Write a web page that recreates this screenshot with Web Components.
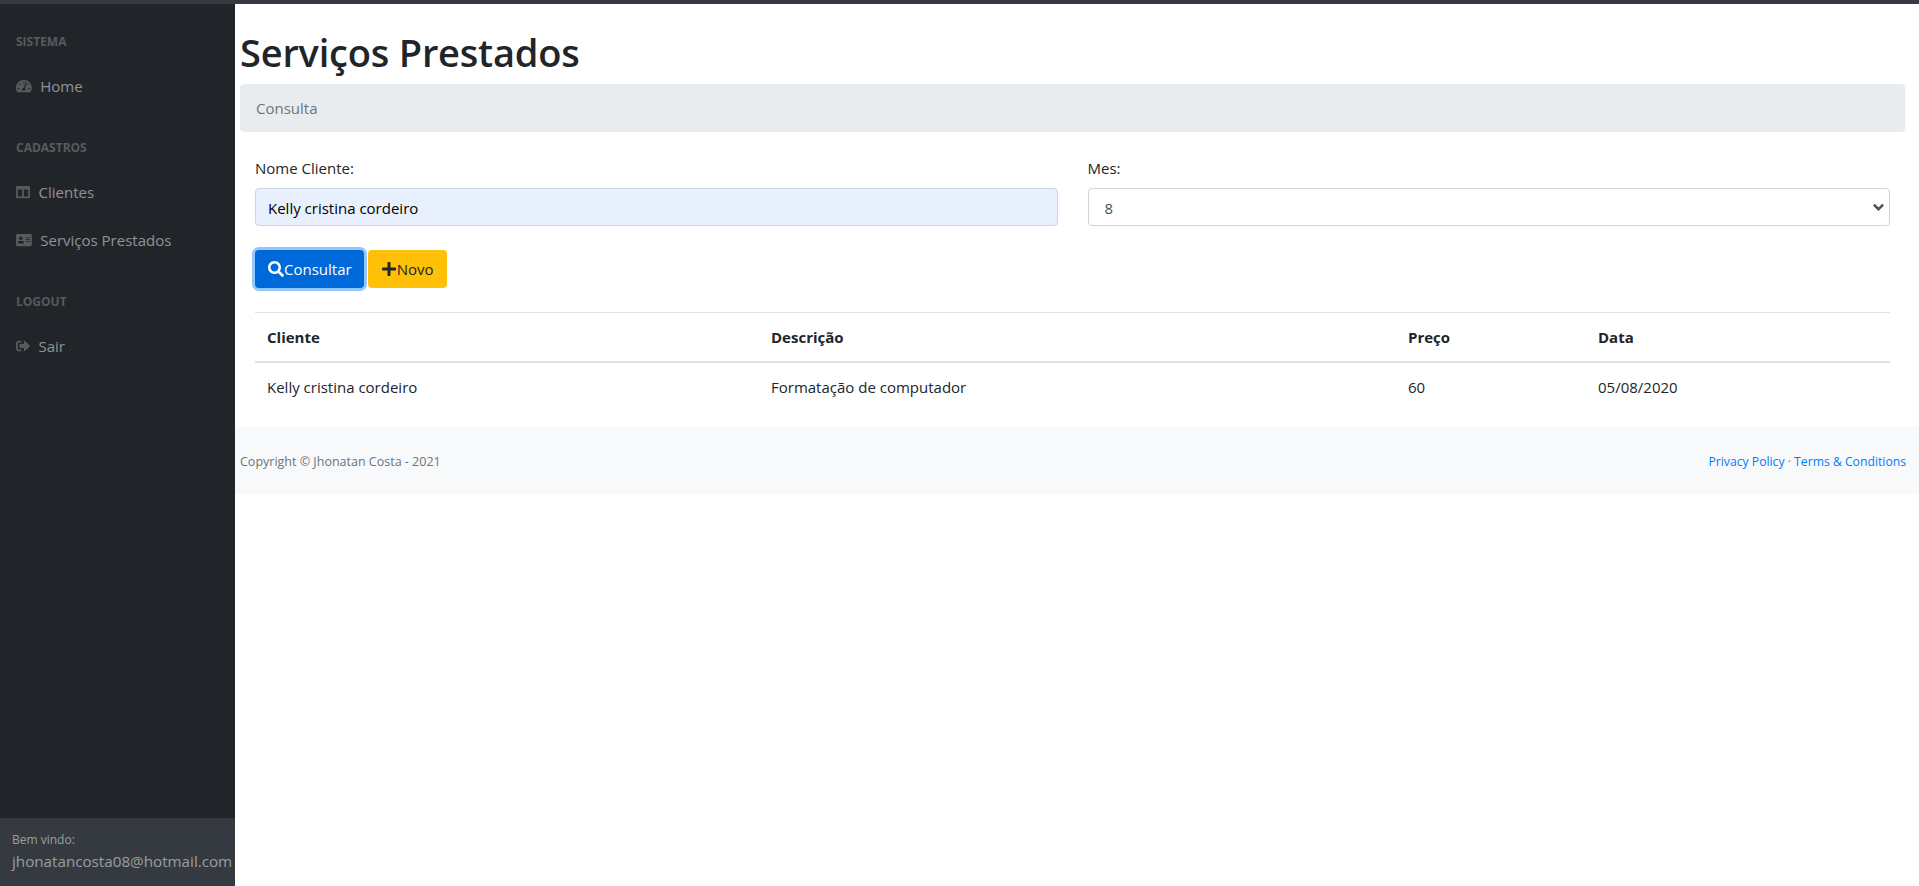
<!DOCTYPE html>
<html lang="pt-BR">
<head>
<meta charset="UTF-8">
<title>Serviços Prestados</title>
<style>
  html, body { margin: 0; height: 100%; }
  body { font-family: "Open Sans", "Liberation Sans", sans-serif; font-size: 15px; color: #212529; background: #fff; overflow: hidden; }
</style>
</head>
<body>
<template id="appShell">
  <style>
    :host { display: grid; grid-template-columns: 235px 1fr; grid-template-rows: 4px 1fr; height: 886px; }
    .top { grid-column: 1 / 3; background: #343a40; }
    main { min-width: 0; }
  </style>
  <div class="top"></div>
  <slot name="side"></slot>
  <main><slot></slot></main>
</template>

<template id="sideNav">
  <style>
    :host { display: flex; flex-direction: column; background: #212529; color: rgba(255,255,255,.5); }
    .menu { flex: 1; }
    .foot { height: 68px; box-sizing: border-box; padding: 13px 0 0 12px; background: #343a40; white-space: nowrap; }
    .foot small { display: block; font-size: 12px; line-height: 18px; }
    .foot span { display: block; font-size: 15.2px; line-height: 24px; }
  </style>
  <div class="menu"><slot></slot></div>
  <div class="foot"><small><slot name="hello"></slot></small><span><slot name="user"></slot></span></div>
</template>

<template id="navHeading">
  <style>
    :host { display: block; padding: 30px 16px 12px; font-size: 12px; line-height: 16px; font-weight: 700; text-transform: uppercase; color: rgba(255,255,255,.25); }
  </style>
  <slot></slot>
</template>

<template id="navLink">
  <style>
    :host { display: flex; align-items: center; height: 48px; padding: 0 16px; font-size: 15px; color: rgba(255,255,255,.5); }
    .ic { display: flex; margin-right: 8.5px; color: rgba(255,255,255,.25); }
    ::slotted(svg) { height: 14px; fill: currentColor; display: block; }
  </style>
  <span class="ic"><slot name="icon"></slot></span><slot></slot>
</template>

<template id="pageTitle">
  <style>
    :host { display: block; padding: 0 14px 0 5px; }
    h1 { margin: 0; padding: 21px 0 4px; font-size: 38px; letter-spacing: -.2px; line-height: 55px; font-weight: 600; color: #212529; }
    .crumb { height: 48px; display: flex; align-items: center; padding: 0 16px; background: #e9ecef; border-radius: 4px; color: #6c757d; font-size: 15px; }
  </style>
  <h1><slot></slot></h1>
  <div class="crumb"><slot name="crumb"></slot></div>
</template>

<template id="searchForm">
  <style>
    :host { display: block; padding: 0 29px 0 20px; }
    .fields { display: grid; grid-template-columns: 1fr 1fr; column-gap: 30px; padding-top: 24px; }
    .btns { display: flex; gap: 4px; padding: 24px 0; }
  </style>
  <div class="fields"><slot name="field"></slot></div>
  <div class="btns"><slot name="button"></slot></div>
</template>

<template id="formField">
  <style>
    :host { display: block; }
    label { display: block; font-size: 15px; line-height: 24px; margin-bottom: 8px; color: #212529; }
    input, select { display: block; width: 100%; height: 38px; box-sizing: border-box; padding: 1px 12px 0; font: inherit; font-size: 15px; border: 1px solid #ced4da; border-radius: 4px; outline: none; background-color: #fff; color: #495057; }
    input.filled { background: #e8f0fe; color: #000; }
    select { appearance: none; padding: 1px 36px 0 16px; background-image: url("data:image/svg+xml,%3csvg xmlns='http://www.w3.org/2000/svg' viewBox='0 0 16 16'%3e%3cpath fill='none' stroke='%23495057' stroke-linecap='square' stroke-linejoin='miter' stroke-width='3.5' d='M2.500 5l5.500 5.500 5.500-5.500'/%3e%3c/svg%3e"); background-repeat: no-repeat; background-position: right 5px center; background-size: 11px 11px; }
  </style>
  <label></label>
</template>

<template id="actionButton">
  <style>
    :host { display: block; }
    .b { display: flex; align-items: center; height: 38px; box-sizing: border-box; padding: 0 14px 0 13px; border-radius: 4px; font-size: 15px; background: #ffc107; color: #212529; }
    :host([primary]) .b { padding-right: 12px; background: #0069d9; color: #fff; box-shadow: 0 0 0 3px rgba(38,143,255,.5); }
    ::slotted(svg) { height: 16px; width: 16px; fill: currentColor; display: block; }
  </style>
  <div class="b"><slot name="icon"></slot><slot></slot></div>
</template>

<template id="resultTable">
  <style>
    :host { display: block; padding: 0 29px 0 20px; }
    table { width: 100%; table-layout: fixed; border-collapse: collapse; font-size: 15px; color: #212529; }
    th, td { text-align: left; padding: 0 12px; }
    th { height: 48px; font-weight: 700; border-top: 1px solid #dee2e6; border-bottom: 2px solid #dee2e6; }
    td { height: 48px; }
  </style>
  <table>
    <colgroup><col style="width:504px"><col style="width:637px"><col style="width:190px"><col></colgroup>
    <thead><tr></tr></thead>
    <tbody></tbody>
  </table>
</template>

<template id="pageFooter">
  <style>
    :host { display: flex; justify-content: space-between; align-items: center; height: 65px; padding: 2px 13px 0 5px; margin-top: 16px; background: #f8f9fa; font-size: 12.5px; color: #6c757d; }
    .links { font-size: 12.2px; }
    ::slotted(a) { color: #007bff; text-decoration: none; }
  </style>
  <div><slot></slot></div>
  <div class="links"><slot name="links"></slot></div>
</template>

<app-shell>
  <side-nav slot="side">
    <nav-heading>Sistema</nav-heading>
    <nav-link><svg slot="icon" viewBox="0 0 576 512"><path d="M288 32C128.940 32 0 160.940 0 320c0 52.800 14.250 102.260 39.060 144.800 5.610 9.620 16.300 15.200 27.440 15.200h443c11.140 0 21.830-5.580 27.440-15.200C561.750 422.260 576 372.800 576 320c0-159.060-128.940-288-288-288zm0 64c14.710 0 26.580 10.130 30.320 23.650-1.110 2.260-2.640 4.230-3.450 6.670l-9.220 27.670c-5.130 3.490-10.970 6.010-17.640 6.010-17.670 0-32-14.330-32-32S270.330 96 288 96zM96 384c-17.670 0-32-14.330-32-32s14.330-32 32-32 32 14.330 32 32-14.330 32-32 32zm48-160c-17.670 0-32-14.330-32-32s14.330-32 32-32 32 14.330 32 32-14.330 32-32 32zm246.770-72.410l-61.330 184C343.130 347.330 352 364.540 352 384c0 11.720-3.380 22.550-8.880 32H232.880c-5.500-9.450-8.880-20.280-8.880-32 0-33.940 26.500-61.430 59.900-63.590l61.340-184.010c4.170-12.560 17.730-19.450 30.360-15.170 12.570 4.190 19.350 17.790 15.170 30.360zm14.660 57.200l15.520-46.550c3.470-1.290 7.130-2.230 11.050-2.230 17.670 0 32 14.330 32 32s-14.330 32-32 32c-11.380-.010-20.890-6.280-26.570-15.220zM480 384c-17.670 0-32-14.330-32-32s14.330-32 32-32 32 14.330 32 32-14.330 32-32 32z"/></svg>Home</nav-link>
    <nav-heading>Cadastros</nav-heading>
    <nav-link><svg slot="icon" viewBox="0 0 512 512"><path d="M464 32H48C21.490 32 0 53.490 0 80v352c0 26.510 21.490 48 48 48h416c26.510 0 48-21.490 48-48V80c0-26.510-21.490-48-48-48zM224 416H64V160h160v256zm224 0H288V160h160v256z"/></svg>Clientes</nav-link>
    <nav-link><svg slot="icon" viewBox="0 0 576 512"><path d="M528 32H48C21.500 32 0 53.500 0 80v352c0 26.500 21.500 48 48 48h480c26.500 0 48-21.500 48-48V80c0-26.500-21.500-48-48-48zm-352 96c35.300 0 64 28.700 64 64s-28.700 64-64 64-64-28.700-64-64 28.700-64 64-64zm112 236.800c0 10.600-10 19.200-22.400 19.200H86.400C74 384 64 375.400 64 364.800v-19.200c0-31.800 30.100-57.600 67.200-57.600h5c12.300 5.100 25.700 8 39.800 8s27.600-2.900 39.800-8h5c37.100 0 67.200 25.800 67.200 57.600v19.200zM512 312c0 4.400-3.600 8-8 8H360c-4.400 0-8-3.600-8-8v-16c0-4.400 3.600-8 8-8h144c4.400 0 8 3.600 8 8v16zm0-64c0 4.400-3.600 8-8 8H360c-4.400 0-8-3.600-8-8v-16c0-4.400 3.600-8 8-8h144c4.400 0 8 3.600 8 8v16zm0-64c0 4.400-3.600 8-8 8H360c-4.400 0-8-3.600-8-8v-16c0-4.400 3.600-8 8-8h144c4.400 0 8 3.600 8 8v16z"/></svg>Serviços Prestados</nav-link>
    <nav-heading>Logout</nav-heading>
    <nav-link><svg slot="icon" viewBox="0 0 512 512"><path d="M497 273L329 441c-15 15-41 4.500-41-17v-96H152c-13.300 0-24-10.700-24-24v-96c0-13.300 10.700-24 24-24h136V88c0-21.400 25.900-32 41-17l168 168c9.300 9.400 9.300 24.600 0 34zM192 436v-40c0-6.600-5.400-12-12-12H96c-17.700 0-32-14.300-32-32V160c0-17.700 14.300-32 32-32h84c6.600 0 12-5.400 12-12V76c0-6.600-5.400-12-12-12H96c-53 0-96 43-96 96v192c0 53 43 96 96 96h84c6.600 0 12-5.400 12-12z"/></svg>Sair</nav-link>
    <span slot="hello">Bem vindo:</span>
    <span slot="user">jhonatancosta08@hotmail.com</span>
  </side-nav>

  <page-title>Serviços Prestados<span slot="crumb">Consulta</span></page-title>

  <search-form>
    <form-field slot="field" label="Nome Cliente:" value="Kelly cristina cordeiro"></form-field>
    <form-field slot="field" label="Mes:" value="8" options="8"></form-field>
    <action-button slot="button" primary><svg slot="icon" viewBox="0 0 512 512"><path d="M505 442.700L405.300 343c-4.500-4.500-10.600-7-17-7H372c27.600-35.300 44-79.700 44-128C416 93.100 322.900 0 208 0S0 93.100 0 208s93.100 208 208 208c48.300 0 92.700-16.400 128-44v16.300c0 6.400 2.500 12.500 7 17l99.700 99.700c9.400 9.400 24.600 9.400 33.900 0l28.300-28.300c9.400-9.400 9.400-24.600.1-34zM208 336c-70.700 0-128-57.200-128-128 0-70.700 57.200-128 128-128 70.700 0 128 57.200 128 128 0 70.700-57.200 128-128 128z"/></svg>Consultar</action-button>
    <action-button slot="button"><svg slot="icon" viewBox="0 0 448 512"><path d="M416 208H272V64c0-17.670-14.330-32-32-32h-32c-17.670 0-32 14.330-32 32v144H32c-17.670 0-32 14.330-32 32v32c0 17.670 14.330 32 32 32h144v144c0 17.670 14.330 32 32 32h32c17.670 0 32-14.330 32-32V304h144c17.670 0 32-14.330 32-32v-32c0-17.670-14.330-32-32-32z"/></svg>Novo</action-button>
  </search-form>

  <result-table head="Cliente|Descrição|Preço|Data" rows="Kelly cristina cordeiro|Formatação de computador|60|05/08/2020"></result-table>

  <page-footer>Copyright © Jhonatan Costa - 2021<a slot="links" href="#">Privacy Policy</a><span slot="links"> · </span><a slot="links" href="#">Terms &amp; Conditions</a></page-footer>
</app-shell>

<script>
  // plain elements: shadow root + clone of their template
  function simple(tag, tplId) {
    customElements.define(tag, class extends HTMLElement {
      constructor() {
        super();
        this.attachShadow({ mode: 'open' }).appendChild(document.getElementById(tplId).content.cloneNode(true));
      }
    });
  }
  simple('app-shell', 'appShell');
  simple('side-nav', 'sideNav');
  simple('nav-heading', 'navHeading');
  simple('nav-link', 'navLink');
  simple('page-title', 'pageTitle');
  simple('search-form', 'searchForm');
  simple('action-button', 'actionButton');
  simple('page-footer', 'pageFooter');

  class FormField extends HTMLElement {
    constructor() {
      super();
      this._root = this.attachShadow({ mode: 'open' });
      this._root.appendChild(document.getElementById('formField').content.cloneNode(true));
    }
    connectedCallback() {
      const label = this._root.querySelector('label');
      label.textContent = this.getAttribute('label');
      let ctl;
      if (this.hasAttribute('options')) {
        ctl = document.createElement('select');
        this.getAttribute('options').split(',').forEach(o => {
          const opt = document.createElement('option');
          opt.textContent = o;
          ctl.appendChild(opt);
        });
      } else {
        ctl = document.createElement('input');
        ctl.className = 'filled';
        ctl.setAttribute('value', this.getAttribute('value'));
      }
      this._root.appendChild(ctl);
    }
  }
  customElements.define('form-field', FormField);

  class ResultTable extends HTMLElement {
    constructor() {
      super();
      this._root = this.attachShadow({ mode: 'open' });
      this._root.appendChild(document.getElementById('resultTable').content.cloneNode(true));
    }
    connectedCallback() {
      const head = this._root.querySelector('thead tr');
      this.getAttribute('head').split('|').forEach(t => {
        const th = document.createElement('th');
        th.textContent = t;
        head.appendChild(th);
      });
      const tr = document.createElement('tr');
      this.getAttribute('rows').split('|').forEach(t => {
        const td = document.createElement('td');
        td.textContent = t;
        tr.appendChild(td);
      });
      this._root.querySelector('tbody').appendChild(tr);
    }
  }
  customElements.define('result-table', ResultTable);
</script>
</body>
</html>
